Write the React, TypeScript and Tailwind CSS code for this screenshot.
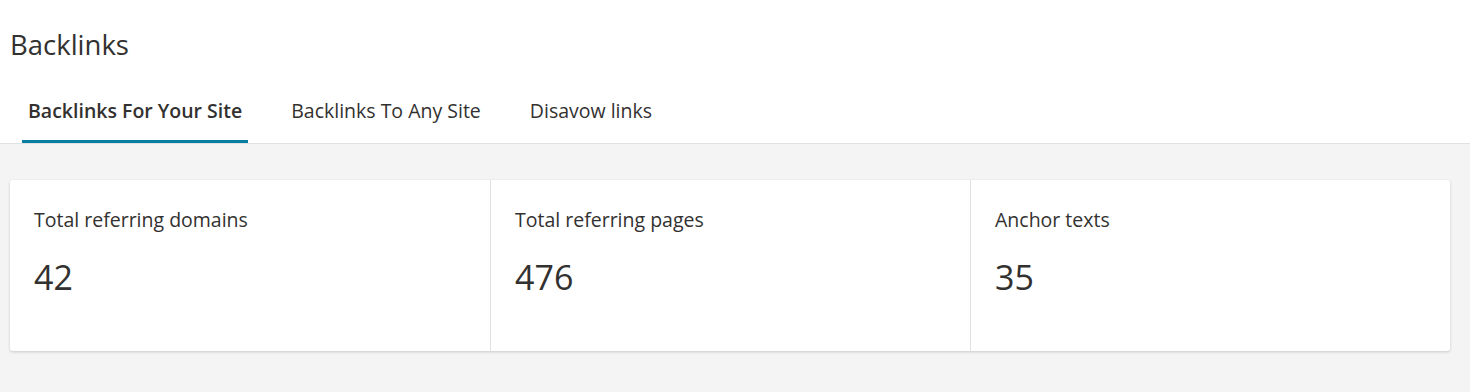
import React from "react";

const TABS = ["Backlinks For Your Site", "Backlinks To Any Site", "Disavow links"];

const STATS = [
  { label: "Total referring domains", value: 42 },
  { label: "Total referring pages", value: 476 },
  { label: "Anchor texts", value: 35 },
];

export default function App() {
  return (
    <div className="min-h-screen bg-[#f4f4f4] text-[#323130] font-['Open_Sans','Noto_Sans',sans-serif]">
      {/* Header */}
      <div className="bg-white border-b border-[#e1e1e1]">
        <h1 className="px-[10px] pt-[26px] text-[27.5px] leading-[38px]">Backlinks</h1>
        <nav className="flex gap-[37px] pl-[22px] pt-[35px]">
          {TABS.map((t, i) => (
            <div
              key={t}
              className={
                "px-[6px] pb-[17px] text-[19.5px] leading-[24px] border-b-[3px] " +
                (i === 0 ? "font-semibold border-[#0a7ea0]" : "border-transparent")
              }
            >
              {t}
            </div>
          ))}
        </nav>
      </div>

      {/* Stats card */}
      <div className="pl-[10px] pr-[20px] pt-[36px]">
        <div className="grid grid-cols-3 bg-white rounded-[3px] shadow-[0_1px_3px_rgba(0,0,0,0.18)]">
          {STATS.map((s, i) => (
            <div key={s.label} className={"h-[171px] px-[24px] pt-[28px] " + (i > 0 ? "border-l border-[#e1e1e1]" : "")}>
              <p className="text-[19.5px] leading-[24px]">{s.label}</p>
              <p className="mt-[21px] text-[34px] leading-[48px]">{s.value}</p>
            </div>
          ))}
        </div>
      </div>
    </div>
  );
}
